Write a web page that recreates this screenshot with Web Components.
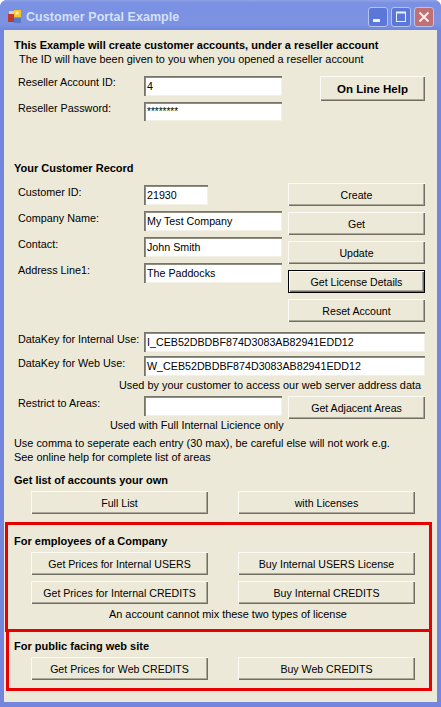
<!DOCTYPE html>
<html>
<head>
<meta charset="utf-8">
<title>Customer Portal Example</title>
<style>
  html, body { margin: 0; padding: 0; background: #fff; }
</style>
</head>
<body>
<portal-app></portal-app>
<script>
class XpWindow extends HTMLElement {
  constructor() {
    super();
    this.attachShadow({ mode: "open" });
  }

  connectedCallback() {
    this.shadowRoot.innerHTML = /*html*/ `
    <style>
      :host {
        display: flex;
        flex-direction: column;
        box-sizing: border-box;
        width: 441px;
        height: 707px;
        padding: 0 4px 5px 4px;
        background: #7385dc;
        border-radius: 7px 7px 0 0;
        overflow: hidden;
      }
      .bar {
        display: flex;
        align-items: center;
        flex: none;
        height: 30px;
        margin: 0 -4px;
        padding: 3px 7px 0 8px;
        box-sizing: border-box;
        background: linear-gradient(#8ea2e6 0, #7a90e2 3px, #7d92e2 24px, #6f86dc 100%);
      }
      .bar svg.app { flex: none; width: 13px; height: 13px; margin-right: 5px; }
      .title {
        flex: 1;
        font: bold 12.5px "Liberation Sans", sans-serif;
        letter-spacing: 0.05px;
        color: #d5e0f7;
      }
      .cap {
        flex: none;
        width: 20px;
        height: 20px;
        margin-left: 3px;
        box-sizing: border-box;
        border: 1px solid #b5c4ef;
        border-radius: 3px;
        background: #5b78d8;
      }
      .cap.close { background: #c26f74; }
      .cap svg { display: block; width: 18px; height: 18px; }
      .client {
        flex: 1;
        background: #ece9d8;
      }
    </style>
    <div class="bar">
      <svg class="app" viewBox="0 0 13 13">
        <rect x="6" y="0" width="7" height="7" fill="#f4c430"/>
        <rect x="7.5" y="1.5" width="3" height="3" fill="#fdf0a0"/>
        <rect x="0" y="4" width="6" height="8" fill="#c0392b"/>
        <rect x="1" y="1" width="5" height="3" fill="#d8d4c8"/>
        <rect x="6" y="8" width="7" height="5" fill="#5a78c8"/>
      </svg>
      <div class="title">${this.getAttribute("title")}</div>
      <div class="cap"><svg viewBox="0 0 18 18"><rect x="4" y="11" width="7" height="3" fill="#eef2fc"/></svg></div>
      <div class="cap"><svg viewBox="0 0 18 18"><rect x="4.5" y="4.5" width="9" height="9" fill="none" stroke="#eef2fc" stroke-width="1"/><rect x="4" y="3.5" width="10" height="2" fill="#eef2fc"/></svg></div>
      <div class="cap close"><svg viewBox="0 0 18 18"><path d="M4.5 4.5 13.5 13.5M13.5 4.5 4.5 13.5" stroke="#f6ecec" stroke-width="2" fill="none"/></svg></div>
    </div>
    <div class="client"><slot></slot></div>
    `;
  }
}

class XpButton extends HTMLElement {
  constructor() {
    super();
    this.attachShadow({ mode: "open" });
  }

  connectedCallback() {
    this.shadowRoot.innerHTML = /*html*/ `
    <style>
      :host {
        display: flex;
        align-items: center;
        justify-content: center;
        box-sizing: border-box;
        height: 23px;
        flex: none;
        background: #ece9d8;
        color: #000;
        font: 10.6px "Liberation Sans", sans-serif;
        box-shadow: inset 1px 1px 0 #fbfaf4, inset -1px -1px 0 #716f64, inset -2px -2px 0 #aca899;
      }
      :host([default]) {
        border: 1px solid #000;
      }
      :host([bold]) {
        font-weight: bold;
      }
    </style>
    <slot></slot>
    `;
  }
}

class XpField extends HTMLElement {
  constructor() {
    super();
    this.attachShadow({ mode: "open" });
  }

  connectedCallback() {
    this.shadowRoot.innerHTML = /*html*/ `
    <style>
      :host {
        display: flex;
        align-items: center;
        box-sizing: border-box;
        height: 20px;
        width: 138px;
        flex: none;
        padding: 0 0 0 3px;
        background: #fff;
        color: #000;
        font: 10.7px "Liberation Sans", sans-serif;
        white-space: nowrap;
        overflow: hidden;
        box-shadow: inset 1px 1px 0 #77756a, inset 2px 2px 0 #8f8d80, inset -1px -1px 0 #f3f1e6;
      }
      :host([password]) {
        font-size: 10px;
        padding-bottom: 1px;
      }
    </style>
    <slot></slot>
    `;
  }
}

class FieldRow extends HTMLElement {
  constructor() {
    super();
    this.attachShadow({ mode: "open" });
  }

  connectedCallback() {
    this.shadowRoot.innerHTML = /*html*/ `
    <style>
      :host {
        display: flex;
        align-items: flex-start;
        padding-left: 14px;
        color: #000;
        font: 10.8px/14px "Liberation Sans", sans-serif;
      }
      .label { flex: none; width: 126px; white-space: nowrap; }
      :host([high]) .label { margin-top: -1px; }
    </style>
    <div class="label">${this.getAttribute("label")}</div>
    <slot></slot>
    `;
  }
}

class RedBox extends HTMLElement {
  constructor() {
    super();
    this.attachShadow({ mode: "open" });
  }

  connectedCallback() {
    this.shadowRoot.innerHTML = /*html*/ `
    <style>
      :host {
        display: flex;
        flex-direction: column;
        box-sizing: border-box;
        width: 427px;
        margin-left: 1px;
        padding: 9px 0 8px 6px;
        border: 3px solid #e60000;
      }
      :host([narrow]) {
        width: 426px;
        margin: -3px 0 0 2px;
        padding: 7px 0 8px 5px;
      }
      .head {
        font: bold 11px/14px "Liberation Sans", sans-serif;
        color: #000;
        white-space: nowrap;
      }
    </style>
    <div class="head">${this.getAttribute("heading")}</div>
    <slot></slot>
    `;
  }
}

class PortalApp extends HTMLElement {
  constructor() {
    super();
    this.attachShadow({ mode: "open" });
  }

  connectedCallback() {
    this.shadowRoot.innerHTML = /*html*/ `
    <style>
      :host {
        display: block;
        font: 10.9px/14px "Liberation Sans", sans-serif;
        color: #000;
      }
      .head {
        font-size: 11px;
        font-weight: bold;
        padding-left: 10px;
        white-space: nowrap;
      }
      .text { white-space: nowrap; padding-left: 10px; }
      .top { padding-top: 8px; }
      .sub { padding-left: 15px; }
      .split { display: flex; align-items: flex-start; }
      .fields { display: flex; flex-direction: column; flex: none; width: 284px; }
      .buttons { display: flex; flex-direction: column; gap: 6px; flex: none; width: 137px; }
      .pair { display: flex; gap: 30px; margin: 4px 0 0 17px; }
      .pair + .pair { margin-top: 6px; }
      .pair xp-button { width: 177px; }
      .pair.full { margin: 4px 0 0 27px; }
      .note { margin: 3px 0 0 95px; white-space: nowrap; }
    </style>
    <xp-window title="Customer Portal Example">
      <div class="top head">This Example will create customer accounts, under a reseller account</div>
      <div class="text sub">The ID will have been given to you when you opened a reseller account</div>

      <div class="split" style="margin-top: 10px">
        <div class="fields" style="gap: 6px">
          <field-row high label="Reseller Account ID:"><xp-field>4</xp-field></field-row>
          <field-row high label="Reseller Password:"><xp-field password style="height: 19px">********</xp-field></field-row>
        </div>
        <xp-button bold style="width: 105px; height: 25px; margin-left: 32px; font-size: 11.5px">On Line Help</xp-button>
      </div>

      <div class="head" style="margin-top: 40px">Your Customer Record</div>

      <div class="split" style="margin-top: 8px">
        <div class="fields" style="gap: 6px; padding-top: 2px">
          <field-row label="Customer ID:"><xp-field style="width: 64px">21930</xp-field></field-row>
          <field-row label="Company Name:"><xp-field>My Test Company</xp-field></field-row>
          <field-row label="Contact:"><xp-field>John Smith</xp-field></field-row>
          <field-row label="Address Line1:"><xp-field>The Paddocks</xp-field></field-row>
        </div>
        <div class="buttons">
          <xp-button>Create</xp-button>
          <xp-button>Get</xp-button>
          <xp-button>Update</xp-button>
          <xp-button default>Get License Details</xp-button>
          <xp-button>Reset Account</xp-button>
        </div>
      </div>

      <field-row label="DataKey for Internal Use:" style="margin-top: 10px"><xp-field style="width: 281px">I_CEB52DBDBF874D3083AB82941EDD12</xp-field></field-row>
      <field-row label="DataKey for Web Use:" style="margin-top: 4px"><xp-field style="width: 281px">W_CEB52DBDBF874D3083AB82941EDD12</xp-field></field-row>
      <div class="text" style="padding-left: 115px; margin-top: 2px">Used by your customer to access our web server address data</div>

      <div class="split" style="margin-top: 4px">
        <div class="fields"><field-row label="Restrict to Areas:"><xp-field></xp-field></field-row></div>
        <xp-button style="width: 137px">Get Adjacent Areas</xp-button>
      </div>
      <div class="text" style="padding-left: 106px; margin-top: -1px">Used with Full Internal Licience only</div>
      <div class="text" style="margin-top: 4px">Use comma to seperate each entry (30 max), be careful else will not work e.g.</div>
      <div class="text">See online help for complete list of areas</div>

      <div class="head" style="margin-top: 9px">Get list of accounts your own</div>
      <div class="pair full">
        <xp-button>Full List</xp-button>
        <xp-button>with Licenses</xp-button>
      </div>

      <red-box heading="For employees of a Company" style="margin-top: 8px">
        <div class="pair">
          <xp-button>Get Prices for Internal USERS</xp-button>
          <xp-button>Buy Internal USERS License</xp-button>
        </div>
        <div class="pair">
          <xp-button>Get Prices for Internal CREDITS</xp-button>
          <xp-button>Buy Internal CREDITS</xp-button>
        </div>
        <div class="note">An account cannot mix these two types of license</div>
      </red-box>
      <red-box narrow heading="For public facing web site">
        <div class="pair">
          <xp-button>Get Prices for Web CREDITS</xp-button>
          <xp-button>Buy Web CREDITS</xp-button>
        </div>
      </red-box>
    </xp-window>
    `;
  }
}

customElements.define("xp-window", XpWindow);
customElements.define("xp-button", XpButton);
customElements.define("xp-field", XpField);
customElements.define("field-row", FieldRow);
customElements.define("red-box", RedBox);
customElements.define("portal-app", PortalApp);
</script>
</body>
</html>
